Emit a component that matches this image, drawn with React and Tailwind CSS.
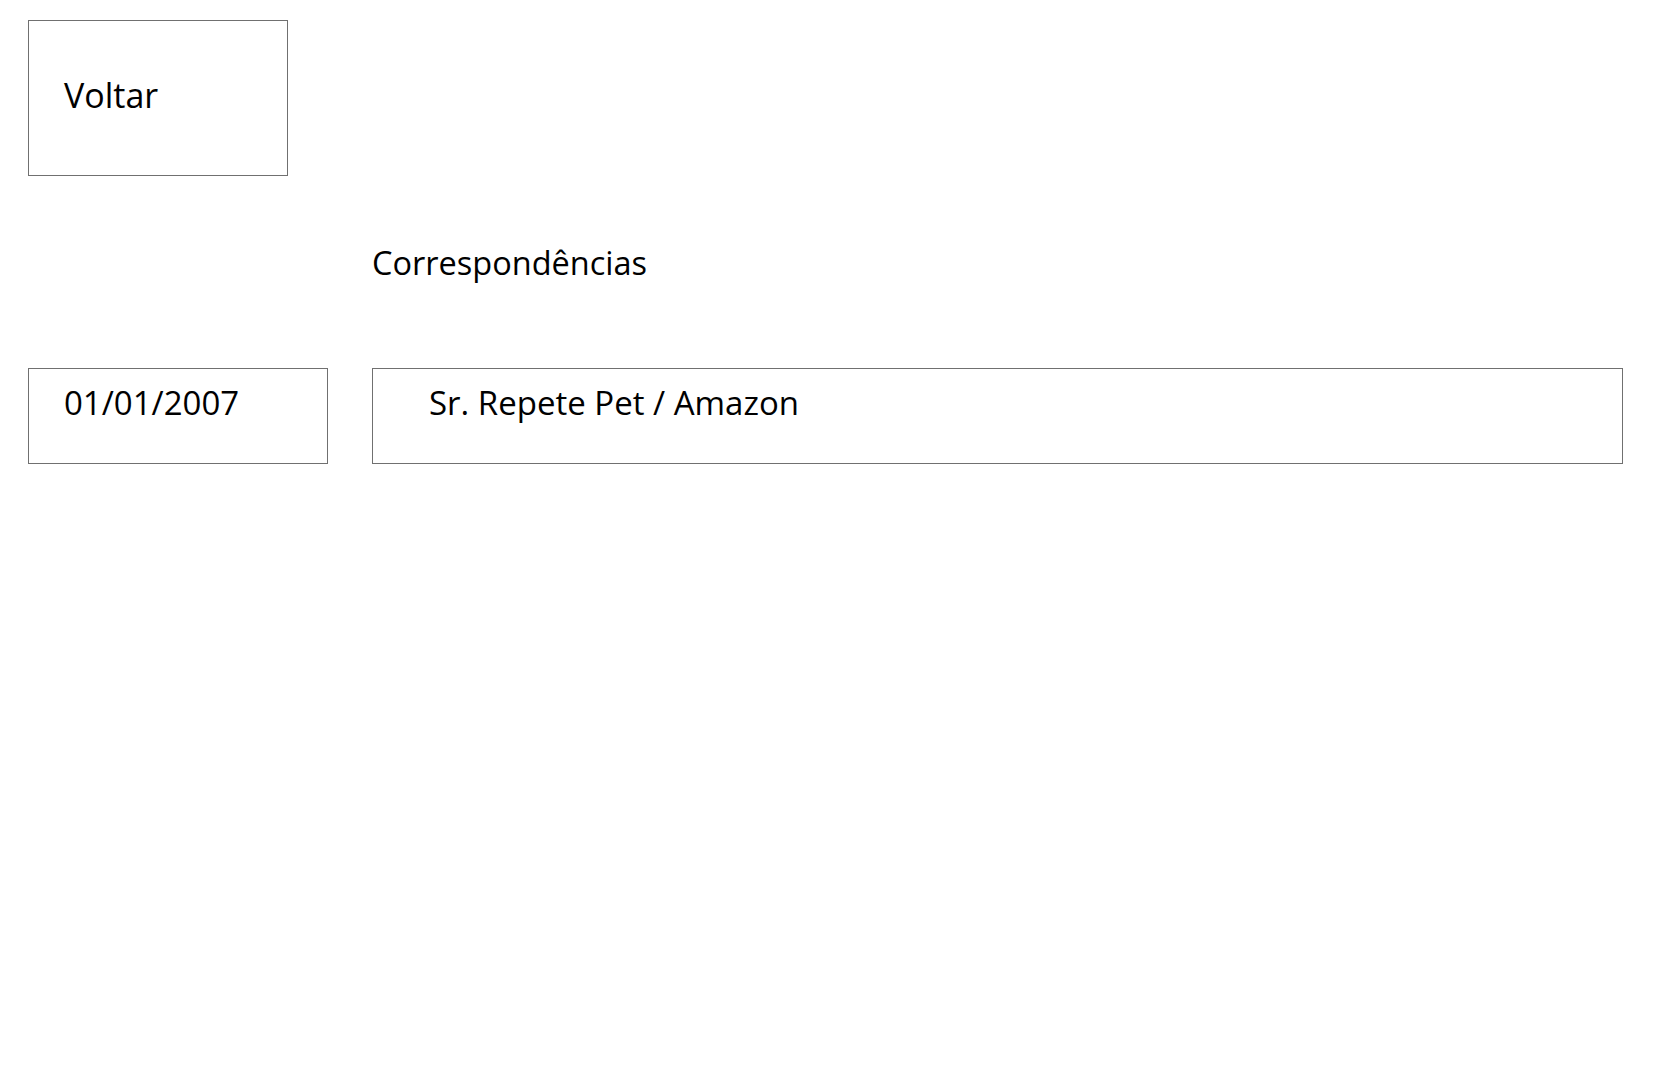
export default function App() {
  return (
    <div className="min-h-screen bg-white pl-[28px] pt-[20px] text-black font-['Open_Sans',sans-serif]">
      <button className="flex h-[156px] w-[260px] items-start border border-[#707070] bg-white pl-[35px] pt-[53px] text-left text-[34px] leading-[42px]">
        Voltar
      </button>

      <h1 className="ml-[344px] mt-[67px] text-[32.5px] font-normal leading-[40px]">
        Correspondências
      </h1>

      <div className="mt-[85px] flex gap-[44px]">
        <div className="h-[96px] w-[300px] border border-[#707070] pl-[35px] pt-[14px] text-[33px] leading-[40px]">
          01/01/2007
        </div>
        <div className="h-[96px] w-[1251px] border border-[#707070] pl-[56px] pt-[14px] text-[33px] leading-[40px]">
          Sr. Repete Pet / Amazon
        </div>
      </div>
    </div>
  );
}
